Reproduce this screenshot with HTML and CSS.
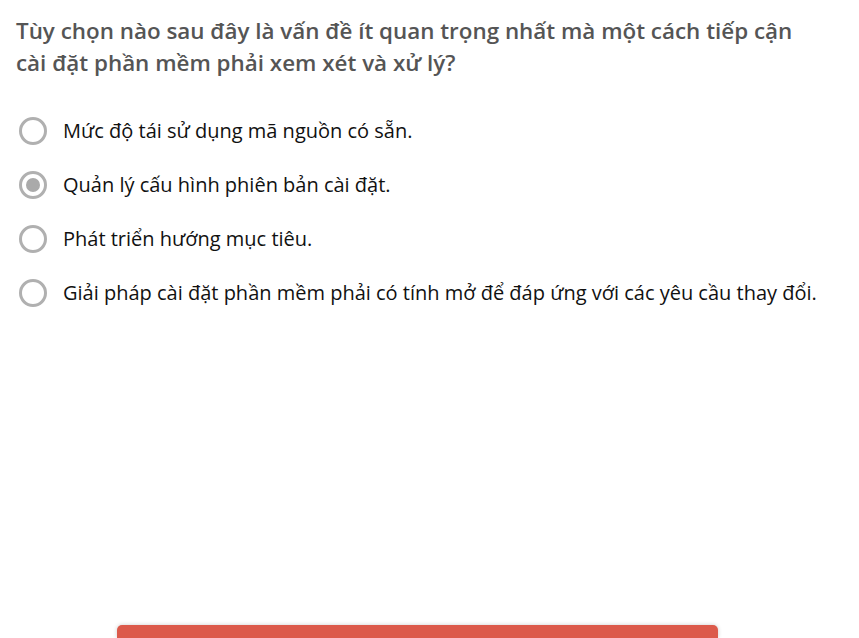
FILE: index.html
```html
<!DOCTYPE html>
<html lang="vi">
<head>
<meta charset="utf-8">
<link rel="stylesheet" href="styles.css">
</head>
<body>
<div class="quiz">
  <h1 class="question">Tùy chọn nào sau đây là vấn đề ít quan trọng nhất mà một cách tiếp cận cài đặt phần mềm phải xem xét và xử lý?</h1>
  <ul class="options">
    <li class="option"><span class="radio"></span><span class="label">Mức độ tái sử dụng mã nguồn có sẵn.</span></li>
    <li class="option"><span class="radio checked"></span><span class="label">Quản lý cấu hình phiên bản cài đặt.</span></li>
    <li class="option"><span class="radio"></span><span class="label">Phát triển hướng mục tiêu.</span></li>
    <li class="option"><span class="radio"></span><span class="label">Giải pháp cài đặt phần mềm phải có tính mở để đáp ứng với các yêu cầu thay đổi.</span></li>
  </ul>
  <div class="actions"><button class="submit"></button></div>
</div>
</body>
</html>
```
FILE: styles.css
```css
html, body {
  margin: 0;
  padding: 0;
  background: #fff;
}
body {
  font-family: "Open Sans", "Liberation Sans", sans-serif;
  overflow: hidden;
  height: 638px;
}
.quiz {
  padding: 15px 16px 0 16px;
}
.question {
  margin: 0;
  font-size: 22.4px;
  line-height: 32px;
  font-weight: 600;
  color: #555;
  width: 800px;
}
.options {
  list-style: none;
  margin: 38px 0 0 0;
  padding: 0;
  display: flex;
  flex-direction: column;
  gap: 26px;
}
.option {
  display: flex;
  align-items: center;
  gap: 16px;
  height: 28px;
}
.radio {
  box-sizing: border-box;
  width: 28px;
  height: 28px;
  border: 3px solid #b0b0b0;
  border-radius: 50%;
  margin-left: 3px;
  display: flex;
  align-items: center;
  justify-content: center;
  flex: none;
}
.radio.checked::after {
  content: "";
  width: 14px;
  height: 14px;
  border-radius: 50%;
  background: #aaa;
}
.label {
  font-size: 20px;
  color: #111;
  line-height: 28px;
}
.actions {
  margin-top: 318px;
  padding-left: 101px;
}
.submit {
  display: block;
  width: 601px;
  height: 13px;
  border: none;
  border-radius: 5px 5px 0 0;
  background: #dc5a4b;
  box-shadow: 0 0 4px rgba(0,0,0,0.2);
}
```
